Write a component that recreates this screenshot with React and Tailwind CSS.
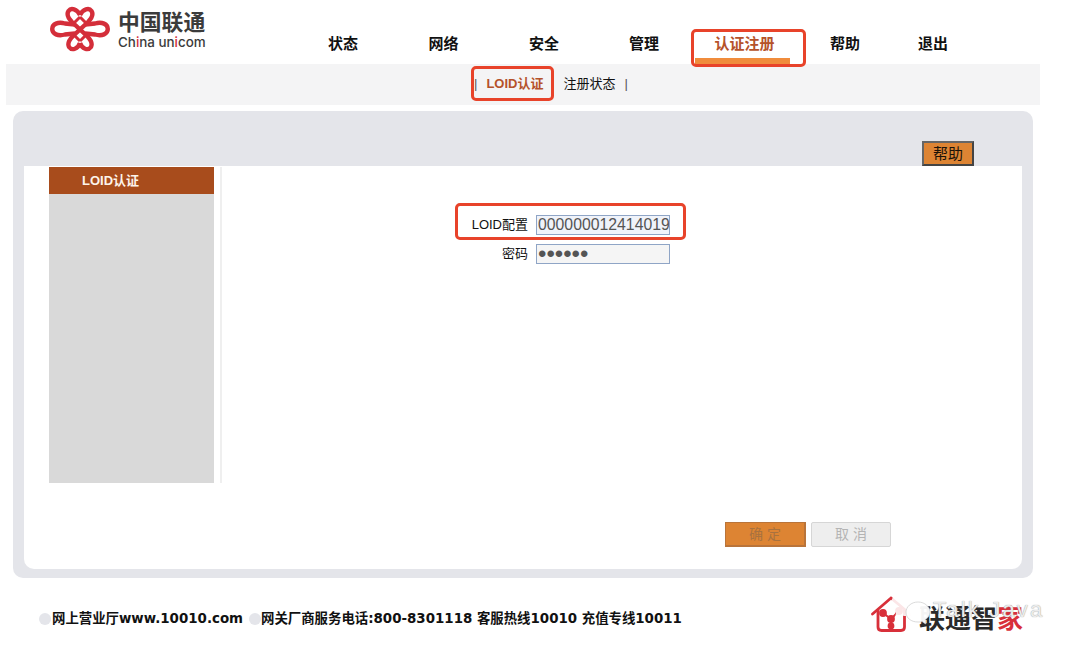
const cjk = '"Liberation Sans","Noto Sans CJK SC",sans-serif';

function Knot() {
  return (
    <svg width="60" height="46" viewBox="0 0 60 46" fill="none" stroke="#d42e3a" strokeWidth="4.400" className="shrink-0">
      <path d="M30 9C27 3 21 1.500 18.500 5C16 9 19 13 22 16L37 30C40 33 43 37 41 41C38 45 32 43 30 37" />
      <path d="M30 9C33 3 39 1.500 41.500 5C44 9 41 13 38 16L23 30C20 33 17 37 19 41C22 45 28 43 30 37" />
      <path d="M25 18.500L15 17.500C8 15.500 2.200 18 2.200 23C2.200 28 8 30.500 15 28.500L25 27.500" />
      <path d="M35 18.500L45 17.500C52 15.500 57.800 18 57.800 23C57.800 28 52 30.500 45 28.500L35 27.500" />
      <path d="M30 11L24 17M30 11L36 17M30 35L24 29M30 35L36 29" strokeWidth="3" />
      <circle cx="7" cy="23" r="2" fill="#fff" stroke="none" />
      <circle cx="53" cy="23" r="2" fill="#fff" stroke="none" />
      <circle cx="23" cy="8" r="1.500" fill="#fff" stroke="none" />
      <circle cx="37" cy="8" r="1.500" fill="#fff" stroke="none" />
      <circle cx="23" cy="38" r="1.500" fill="#fff" stroke="none" />
      <circle cx="37" cy="38" r="1.500" fill="#fff" stroke="none" />
    </svg>
  );
}

function HomeKnot() {
  return (
    <svg width="41" height="38" viewBox="0 0 41 38" fill="none" stroke="#d8303a" strokeWidth="2.800" className="shrink-0">
      <path d="M1.500 19L20 3L39 19" strokeLinecap="round" />
      <path d="M7 15V32C7 34.500 8.500 35.500 10.500 35.500H30C32 35.500 33.500 34.500 33.500 32V15" />
      <path d="M12 18L20 24L28 16M20 24V31" strokeWidth="2" />
      <circle cx="12" cy="18" r="2.500" fill="#d8303a" />
      <circle cx="28" cy="16" r="2.500" fill="#d8303a" />
      <circle cx="20" cy="24" r="2.500" fill="#d8303a" />
      <circle cx="20" cy="31" r="2" fill="#d8303a" />
    </svg>
  );
}

function Wechat() {
  return (
    <svg width="42" height="38" viewBox="0 0 42 38" className="absolute left-[890px] top-[590px]">
      <path d="M16 1C7 1 1 7 1 14C1 18 3 21 6 23L5 28L11 25C13 26 15 26 17 26C25 26 31 20 31 13C31 6 24 1 16 1Z" fill="#fff" fillOpacity="0.88" />
      <path d="M28 12C21 12 16 17 16 22C16 28 21 32 28 32C29.500 32 31 32 32 31.500L36 34L35 30C38 28 40 25 40 22C40 17 35 12 28 12Z" fill="#fff" fillOpacity="0.95" stroke="#cccccc" strokeWidth="0.700" />
    </svg>
  );
}

const nav = [
  ['状态', 'w-[100px]', 'text-[#111]'],
  ['网络', 'w-[101px]', 'text-[#111]'],
  ['安全', 'w-[100px]', 'text-[#111]'],
  ['管理', 'w-[100px]', 'text-[#111]'],
  ['认证注册', 'w-[101px]', 'text-[#b5522a]'],
  ['帮助', 'w-[100px]', 'text-[#111]'],
  ['退出', 'w-[76px]', 'text-[#111]'],
];

export default function App() {
  return (
    <div className="relative w-[1080px] h-[655px] overflow-hidden bg-white" style={{ fontFamily: cjk }}>
      <header className="flex h-[64px]">
        <div className="ml-[50px] mt-[6px] flex w-[243px] shrink-0 items-start gap-[8px]">
          <Knot />
          <div className="text-[#3b3b3b]">
            <div className="mt-[5px] text-[21.800px] font-bold leading-[24px]">中国联通</div>
            <div className="text-[13.400px] font-medium leading-[15px]" style={{ fontFamily: 'Inter, sans-serif' }}>
              Ch<span className="text-[#d42e3a]">i</span>na un<span className="text-[#d42e3a]">i</span>com
            </div>
          </div>
        </div>
        <nav className="flex pt-[33px]">
          {nav.map(([t, w, c]) => (
            <div key={t} className={`${w} ${c} text-center text-[15px] font-bold leading-[21px]`}>{t}</div>
          ))}
        </nav>
      </header>

      <div className="ml-[6px] flex h-[41px] w-[1034px] items-center bg-[#f4f4f5] pb-[2px] pl-[468px] text-[13px]">
        <span className="mr-[9px] text-[#555]">|</span>
        <span className="font-bold text-[#b5522a]">LOID认证</span>
        <span className="ml-[20px] text-[#111]">注册状态</span>
        <span className="ml-[9px] text-[#555]">|</span>
      </div>

      <main className="ml-[13px] mt-[6px] flex h-[467px] w-[1020px] flex-col rounded-[10px] bg-[#e4e5ea] px-[11px] pb-[9px]">
        <div className="flex h-[55px] shrink-0 items-end justify-end pr-[48px]">
          <button className="h-[25px] w-[52px] border-2 border-[#666] border-b-[#444] border-r-[#444] bg-[#dd8433] text-[15px] leading-[20px] text-[#1c1208]">帮助</button>
        </div>
        <div className="flex flex-1 flex-col rounded-b-[10px] bg-white">
          <div className="flex">
            <aside className="ml-[25px] mt-[1px] h-[316px] w-[165px] bg-[#d9d9d9]">
              <div className="flex h-[27px] items-center bg-[#a84c1c] pl-[33px] text-[13px] font-bold text-[#fdf3ea]">LOID认证</div>
            </aside>
            <div className="ml-[6px] mt-[1px] h-[316px] w-[2px] bg-[#efefef]" />
            <div className="ml-[74px] flex flex-col gap-[9px] pt-[49px] text-[13px] text-[#111]">
              <div className="flex h-[20px] items-center">
                <label className="w-[240px] pr-[8px] text-right">LOID配置</label>
                <input readOnly value="000000012414019" className="h-[20px] w-[134px] border border-[#8fa5c6] bg-[#f0f3fa] pl-[1px] text-[15.800px] text-[#555] outline-none" />
              </div>
              <div className="flex h-[20px] items-center">
                <label className="w-[240px] pr-[8px] text-right">密码</label>
                <input readOnly type="password" value="123456" className="h-[20px] w-[134px] border border-[#8fa5c6] bg-[#f5f5f5] pl-[1px] text-[24px] leading-[18px] text-[#555] outline-none" />
              </div>
            </div>
          </div>
          <div className="mr-[131px] mt-[39px] flex justify-end gap-[5px] text-[14px] tracking-[4px]">
            <button className="h-[25px] w-[81px] border border-[#b9743a] border-b-2 border-r-2 bg-[#dd8433] pl-[4px] text-[#a8723f]">确定</button>
            <button className="h-[25px] w-[80px] rounded-[2px] border border-[#d6d6d6] bg-[#eeeeee] pl-[4px] text-[#b4b4b4]">取消</button>
          </div>
        </div>
      </main>

      <footer className="flex h-[71px] items-start pl-[39px] pt-[32px] text-[13.400px] font-bold leading-[18px] text-[#111]" style={{ fontFamily: '"DejaVu Sans","Noto Sans CJK SC",sans-serif' }}>
        <span className="mr-[1px] mt-[3px] h-[12px] w-[12px] shrink-0 rounded-full bg-[#e4e5ea]" />
        <span className="whitespace-nowrap">网上营业厅www.10010.com</span>
        <span className="ml-[6px] mt-[3px] h-[12px] w-[12px] shrink-0 rounded-full bg-[#e4e5ea]" />
        <span className="whitespace-nowrap">网关厂商服务电话:800-8301118 客服热线10010 充值专线10011</span>
        <div className="absolute left-[871px] top-[595px] flex items-end">
          <HomeKnot />
          <span className="mb-[1px] ml-[7px] whitespace-nowrap text-[26px] font-bold leading-[30px] text-[#2a2a2a]" style={{ fontFamily: '"Noto Sans CJK SC",sans-serif' }}>
            联通智<span className="text-[#d8303a]">家</span>
          </span>
        </div>
      </footer>

      <Wechat />
      <span className="absolute left-[933px] top-[598px] text-[22px] leading-[24px] tracking-[2.200px] text-[#ececec]" style={{ fontFamily: '"Liberation Sans",sans-serif', textShadow: '0 0 1px #8a8a8a' }}>Talk Java</span>

      <div className="absolute left-[695px] top-[58px] h-[6px] w-[95px] bg-[#f08c3c]" />
      <div className="absolute left-[691px] top-[29px] h-[38px] w-[115px] rounded-[5px] border-[3px] border-[#e8432a]" />
      <div className="absolute left-[471px] top-[66px] h-[35px] w-[83px] rounded-[5px] border-[3px] border-[#e8432a]" />
      <div className="absolute left-[455px] top-[203px] h-[37px] w-[231px] rounded-[5px] border-[3px] border-[#e8432a]" />
    </div>
  );
}
